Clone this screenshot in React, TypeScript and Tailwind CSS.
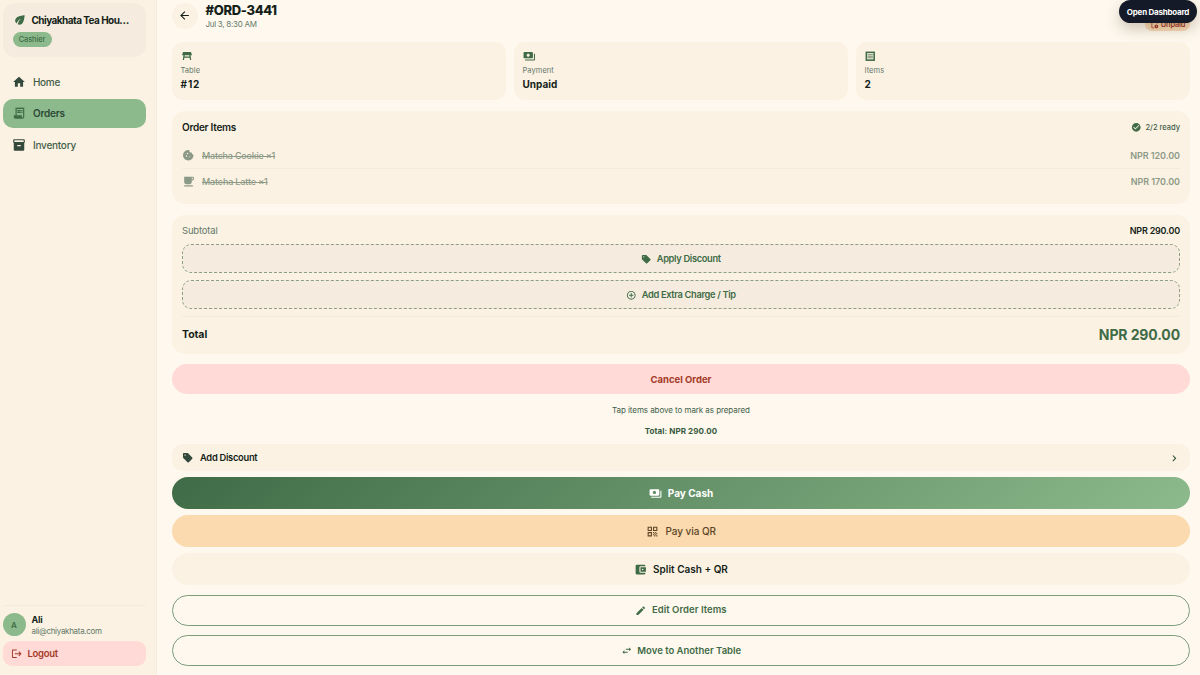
import type { ReactNode } from "react";
import {
  MdAccountBalanceWallet,
  MdArrowBack,
  MdCheckCircle,
  MdChevronRight,
  MdControlPoint,
  MdCookie,
  MdEco,
  MdEdit,
  MdHome,
  MdInventory2,
  MdLocalCafe,
  MdLogout,
  MdPayments,
  MdPendingActions,
  MdQrCode,
  MdReceiptLong,
  MdSell,
  MdSwapHoriz,
} from "react-icons/md";

function ItemsIcon() {
  return (
    <svg viewBox="0 0 24 24" className="-ml-px size-[12.5px]" fill="none" stroke="currentColor">
      <rect x="4.5" y="4.5" width="15" height="15" strokeWidth="3" />
      <path d="M7 9h10M7 12h10M7 15h10" strokeWidth="1.4" />
    </svg>
  );
}

function TableIcon() {
  return (
    <svg viewBox="0 0 24 24" className="size-[12px]" fill="currentColor">
      <path d="M4 4h16l2 6.5H2z" />
      <path d="M5 10h2.5l-.4 3.2h9.8L16.500 10H19l1.500 10H18l-.7-4.600H6.700L6 20H3.500z" />
    </svg>
  );
}

function NavItem({ icon, children, active }: { icon: ReactNode; children: ReactNode; active?: boolean }) {
  return (
    <div
      className={`flex h-[29px] items-center gap-[7.5px] rounded-[10px] pl-[9px] text-[10px] ${
        active ? "bg-[#8cba8c] font-semibold text-[#2c4a36]" : "pt-[1px] font-medium text-[#41604a]"
      }`}
    >
      {icon}
      {children}
    </div>
  );
}

function StatCard({ icon, label, value }: { icon: ReactNode; label: string; value: ReactNode }) {
  return (
    <div className="h-[58px] flex-1 rounded-[11px] bg-[#fcf2e3] pl-[8.5px] pt-[8px]">
      <div className="h-[12px] text-[#3f6b46]">{icon}</div>
      <div className="mt-[4px] h-[10px] text-[7.5px] leading-[10px] tracking-[0.06px] text-[#62796a]">{label}</div>
      <div className="mt-[1px] h-[14px] text-[10px] font-bold leading-[14px] text-[#141f19]">{value}</div>
    </div>
  );
}

function OrderRow({ icon, name, price }: { icon: ReactNode; name: ReactNode; price: string }) {
  return (
    <div className="flex h-[25px] items-center text-[9px] text-[#41604a] opacity-60">
      <span className="w-[20px]">{icon}</span>
      <span className="flex-1 font-medium line-through">{name}</span>
      <span className="font-semibold tracking-[-0.06px]">{price}</span>
    </div>
  );
}

function DashedButton({ icon, children }: { icon: ReactNode; children: ReactNode }) {
  return (
    <div className="flex h-[28.5px] items-center justify-center gap-[5px] rounded-[9px] border border-dashed border-[#8a9f87] bg-[#f5ecdf] pt-[1.5px] text-[9.3px] font-semibold tracking-[-0.33px] text-[#3f6b46]">
      {icon}
      {children}
    </div>
  );
}

export default function App() {
  return (
    <div className="flex h-[675px] w-[1200px] overflow-hidden bg-[#fff8ee] font-['Inter',sans-serif]">
      <aside className="flex w-[157px] shrink-0 flex-col border-r border-[#f6ecde] bg-[#fcf2e3] pl-[2.5px] pr-[10px]">
        <div className="mt-[2.5px] h-[54px] rounded-[12px] bg-[#f5ecdf] px-[10px] pt-[10px]">
          <div className="flex h-[15px] items-center gap-[5px] whitespace-nowrap text-[10px] font-bold tracking-[-0.55px] text-[#141f19]">
            <MdEco className="size-[14px] shrink-0 text-[#3f6b46]" />
            Chiyakhata Tea Hou…
          </div>
          <div className="mt-[4.5px] flex h-[15px] w-[39px] items-center justify-center rounded-full bg-[#8cba8c] pt-[1px] text-[7.5px] font-medium tracking-[-0.15px] text-[#3f6b46]">
            Cashier
          </div>
        </div>
        <nav className="mt-[10.5px] flex flex-col gap-[2.5px]">
          <NavItem icon={<MdHome className="size-[14px] text-[#33493c]" />}>
            <span className="tracking-[-0.33px]">Home</span>
          </NavItem>
          <NavItem active icon={<MdReceiptLong className="size-[14px] text-[#3f6b46]" />}>
            <span className="tracking-[-0.2px]">Orders</span>
          </NavItem>
          <NavItem icon={<MdInventory2 className="size-[14px] text-[#33493c]" />}>
            <span className="tracking-[-0.25px]">Inventory</span>
          </NavItem>
        </nav>
        <div className="mt-auto border-t border-[#f5ebdd] pt-[7px]">
          <div className="flex items-center gap-[6px]">
            <div className="flex size-[23px] items-center justify-center rounded-full bg-[#8cba8c] text-[8px] font-semibold text-[#3f6b46]">
              A
            </div>
            <div>
              <div className="text-[9px] font-bold leading-[12px] tracking-[-0.25px] text-[#141f19]">Ali</div>
              <div className="text-[8px] leading-[10px] tracking-[-0.3px] text-[#62796a]">ali@chiyakhata.com</div>
            </div>
          </div>
          <div className="mb-[9px] mt-[5px] flex h-[25px] items-center gap-[5px] rounded-[9px] bg-[#ffdad6] pl-[8.5px] pt-[1px] text-[9.5px] font-semibold tracking-[-0.27px] text-[#a43a28]">
            <MdLogout className="size-[11.5px]" />
            Logout
          </div>
        </div>
      </aside>

      <main className="relative min-w-0 flex-1 pl-[15px] pr-[10px]">
        <header className="flex h-[42px] items-start">
          <div className="mt-[3px] flex size-[25.5px] items-center justify-center rounded-full bg-[#fcf2e3] text-[#141f19]">
            <MdArrowBack className="size-[13px]" />
          </div>
          <div className="ml-[8px] flex-1 pt-[2px]">
            <div className="text-[13px] font-extrabold leading-[16px] tracking-[-0.33px] text-[#141f19]">#ORD-3441</div>
            <div className="mt-[1px] text-[8px] leading-[11px] tracking-[-0.28px] text-[#62796a]">Jul 3, 8:30 AM</div>
          </div>
          <div className="mt-[17px] flex h-[14px] w-[45px] items-center justify-center gap-[2px] rounded-full bg-[#fad9b4] pt-[1px] text-[7.5px] font-semibold tracking-[-0.2px] text-[#a43a28]">
            <MdPendingActions className="size-[9px]" />
            Unpaid
          </div>
        </header>

        <section className="flex gap-[8px]">
          <StatCard icon={<TableIcon />} label="Table" value={<span className="tracking-[0.9px]">#12</span>} />
          <StatCard icon={<MdPayments className="size-[12.5px]" />} label="Payment" value="Unpaid" />
          <StatCard icon={<ItemsIcon />} label="Items" value="2" />
        </section>

        <section className="mt-[11px] h-[93px] rounded-[13px] bg-[#fcf2e3] px-[10px] pt-[9.5px]">
          <div className="flex h-[14px] items-center justify-between">
            <div className="text-[10px] font-semibold tracking-[-0.25px] text-[#141f19]">Order Items</div>
            <div className="flex items-center gap-[4px] text-[7.5px] font-medium text-[#41604a]">
              <MdCheckCircle className="size-[10.5px] text-[#3f6b46]" />
              2/2 ready
            </div>
          </div>
          <div className="mt-[8.5px]">
            <OrderRow
              icon={<MdCookie className="size-[12.5px]" />}
              name={<span className="tracking-[-0.22px]">Matcha Cookie ×1</span>}
              price="NPR 120.00"
            />
            <div className="h-px bg-[#f5ebdd]" />
            <OrderRow
              icon={<MdLocalCafe className="size-[13px]" />}
              name={<span className="tracking-[-0.15px]">Matcha Latte ×1</span>}
              price="NPR 170.00"
            />
          </div>
        </section>

        <section className="mt-[10.5px] h-[139.5px] rounded-[13px] bg-[#fcf2e3] px-[10px] pt-[9.5px]">
          <div className="flex h-[14px] items-center justify-between">
            <span className="text-[9.5px] tracking-[-0.18px] text-[#62796a]">Subtotal</span>
            <span className="text-[9px] font-semibold tracking-[-0.2px] text-[#141f19]">NPR 290.00</span>
          </div>
          <div className="mt-[6px] flex flex-col gap-[7.5px]">
            <DashedButton icon={<MdSell className="size-[10.5px]" />}>Apply Discount</DashedButton>
            <DashedButton icon={<MdControlPoint className="size-[10.5px]" />}>Add Extra Charge / Tip</DashedButton>
          </div>
          <div className="mt-[7px] flex h-[36px] items-center justify-between border-t border-[#f5ebdd]">
            <span className="pt-[1px] text-[10.5px] font-bold tracking-[-0.05px] text-[#141f19]">Total</span>
            <span className="text-[14px] font-bold tracking-[-0.12px] text-[#3f6b46]">NPR 290.00</span>
          </div>
        </section>

        <div className="mt-[10px] flex h-[30px] items-center justify-center rounded-full bg-[#ffdad6] pt-[1.5px] text-[9.5px] font-bold text-[#a43a28]">
          Cancel Order
        </div>
        <div className="mt-[11px] text-center text-[8px] leading-[11px] tracking-[-0.07px] text-[#41604a]">
          Tap items above to mark as prepared
        </div>
        <div className="mt-[10px] text-center text-[8px] font-bold leading-[11px] tracking-[0.1px] text-[#355a3e]">
          Total: NPR 290.00
        </div>

        <div className="mt-[6.5px] flex h-[27.5px] items-center rounded-[10px] bg-[#fcf2e3] pl-[10px] pr-[10px] pt-[1px] text-[9.3px] font-semibold tracking-[-0.27px] text-[#141f19]">
          <MdSell className="size-[11.5px] text-[#33493c]" />
          <span className="ml-[6.5px] flex-1">Add Discount</span>
          <MdChevronRight className="size-[12.5px] text-[#2c4a36]" />
        </div>
        <div className="mt-[6px] flex h-[32px] items-center justify-center gap-[6px] rounded-full bg-[linear-gradient(135deg,#3f6b46,#8cba8c)] text-[10px] font-bold text-white">
          <MdPayments className="size-[13px]" />
          Pay Cash
        </div>
        <div className="mt-[6px] flex h-[31.5px] items-center justify-center gap-[6.5px] rounded-full bg-[#fadaae] pt-[1px] text-[10px] font-medium tracking-[-0.05px] text-[#5e4528]">
          <MdQrCode className="size-[13px]" />
          Pay via QR
        </div>
        <div className="mt-[6.5px] flex h-[31.5px] items-center justify-center gap-[6px] rounded-full bg-[#fcf2e3] pt-[1px] text-[10px] font-semibold text-[#141f19]">
          <MdAccountBalanceWallet className="size-[13px] text-[#3f6b46]" />
          Split Cash + QR
        </div>
        <div className="mt-[10px] flex h-[31px] items-center justify-center gap-[5px] rounded-full border border-[#7c9c7c] pt-[1px] text-[9.5px] font-semibold tracking-[0.05px] text-[#3f6b46]">
          <MdEdit className="size-[11.5px]" />
          Edit Order Items
        </div>
        <div className="mt-[9.5px] flex h-[31px] items-center justify-center gap-[5px] rounded-full border border-[#7c9c7c] pt-[1px] text-[9.5px] font-semibold text-[#3f6b46]">
          <MdSwapHoriz className="size-[11.5px]" />
          Move to Another Table
        </div>

        <div className="absolute right-[3px] top-0 flex h-[23px] w-[78px] items-center justify-center rounded-full bg-[#141a28] text-[8px] font-bold tracking-[-0.23px] text-white shadow-[0_6px_14px_rgba(60,50,20,0.25)]">
          Open Dashboard
        </div>
      </main>
    </div>
  );
}
